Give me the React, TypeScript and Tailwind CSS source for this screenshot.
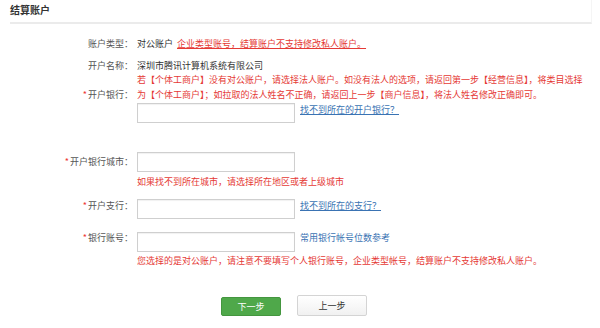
import React from "react";

const Star = () => <span className="text-[#e33] mr-[1px]">*</span>;

export default function App() {
  const font = { fontFamily: '"Noto Sans CJK SC", "Noto Sans", sans-serif' };
  return (
    <div className="w-[600px] h-[328px] bg-white overflow-hidden text-[9px] text-[#555]" style={font}>
      <div className="ml-[10px] w-[582px] h-[24px] border-b-2 border-r border-[#ebebeb] border-r-[#f5f5f5] flex items-center">
        <span className="font-bold text-[10px] text-[#333] leading-[12px] -mt-[2px]">结算账户</span>
      </div>

      {/* row 1 */}
      <div className="flex mt-[12px] leading-[16px]">
        <div className="w-[133px] text-right">账户类型：</div>
        <div className="ml-[4px] whitespace-nowrap">
          <span className="text-[#333]">对公账户</span>
          <span className="ml-[4px] text-[#e53935] underline decoration-[#e53935]">企业类型账号，结算账户不支持修改私人账户。</span>
        </div>
      </div>

      {/* row 2 */}
      <div className="flex mt-[8px] leading-[12px]">
        <div className="w-[133px] text-right">开户名称：</div>
        <div className="ml-[4px] text-[#333] whitespace-nowrap">深圳市腾讯计算机系统有限公司</div>
      </div>

      {/* bank row */}
      <div className="flex leading-[15px]">
        <div className="w-[133px] text-right pt-[15px]">
          <Star />开户银行：
        </div>
        <div className="ml-[4px] flex flex-col">
          <div className="text-[#e53935] whitespace-nowrap">若【个体工商户】没有对公账户，请选择法人账户。如没有法人的选项，请返回第一步【经营信息】，将类目选择</div>
          <div className="text-[#e53935] whitespace-nowrap">为【个体工商户】；如拉取的法人姓名不正确，请返回上一步【商户信息】，将法人姓名修改正确即可。</div>
          <div className="flex items-start mt-[1px]">
            <div className="w-[158px] h-[20px] border border-[#cfcfcf] shadow-[inset_0_1px_1px_rgba(0,0,0,0.06)]" />
            <a className="ml-[5px] text-[#3a73b3] underline leading-[13px] whitespace-nowrap">找不到所在的开户银行？</a>
          </div>
        </div>
      </div>

      {/* city row */}
      <div className="flex items-center mt-[29px]">
        <div className="w-[133px] text-right leading-[12px]">
          <Star />开户银行城市：
        </div>
        <div className="ml-[4px] w-[158px] h-[20px] border border-[#cfcfcf] shadow-[inset_0_1px_1px_rgba(0,0,0,0.06)]" />
      </div>
      <div className="ml-[137px] mt-[4px] leading-[12px] text-[#e53935] whitespace-nowrap">如果找不到所在城市，请选择所在地区或者上级城市</div>

      {/* branch row */}
      <div className="flex items-start mt-[11px]">
        <div className="w-[133px] text-right leading-[12px] pt-[1px]">
          <Star />开户支行：
        </div>
        <div className="ml-[4px] w-[158px] h-[20px] border border-[#cfcfcf] shadow-[inset_0_1px_1px_rgba(0,0,0,0.06)]" />
        <a className="ml-[5px] pt-[1px] text-[#3a73b3] underline leading-[12px] whitespace-nowrap">找不到所在的支行？</a>
      </div>

      {/* account row */}
      <div className="flex items-start mt-[13px]">
        <div className="w-[133px] text-right leading-[12px]">
          <Star />银行账号：
        </div>
        <div className="ml-[4px] w-[158px] h-[20px] border border-[#cfcfcf] shadow-[inset_0_1px_1px_rgba(0,0,0,0.06)]" />
        <span className="ml-[5px] text-[#3a73b3] leading-[12px] whitespace-nowrap">常用银行帐号位数参考</span>
      </div>
      <div className="ml-[137px] mt-[3px] leading-[12px] text-[#e53935] whitespace-nowrap">您选择的是对公账户，请注意不要填写个人银行账号，企业类型帐号，结算账户不支持修改私人账户。</div>

      {/* buttons */}
      <div className="flex items-start ml-[221px] mt-[28px] gap-[16px]">
        <button className="mt-[2px] w-[60px] h-[19px] rounded-[2px] bg-[#4fa84a] border border-[#44963f] text-white text-[9px] leading-[17px]">下一步</button>
        <button className="w-[70px] h-[21px] rounded-[2px] bg-gradient-to-b from-white to-[#f1f1f1] border border-[#d4d4d4] text-[#333] text-[9px] leading-[19px]">上一步</button>
      </div>
    </div>
  );
}
